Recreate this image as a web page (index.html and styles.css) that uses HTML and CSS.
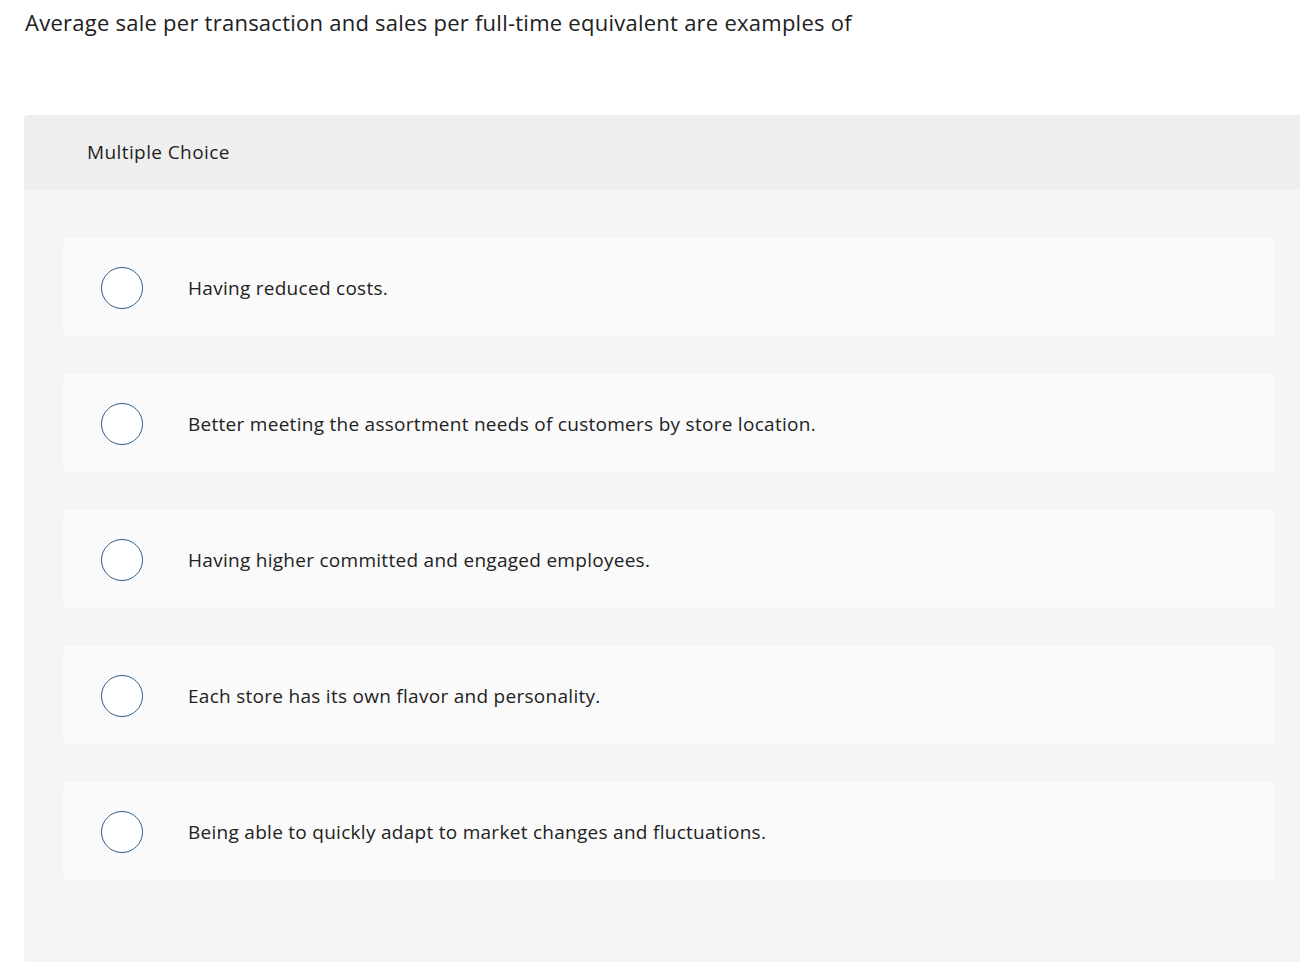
FILE: index.html
```html
<!DOCTYPE html>
<html lang="en">
<head>
<meta charset="utf-8">
<title>Multiple Choice</title>
<link rel="stylesheet" href="styles.css">
</head>
<body>
<div class="page">
  <p class="question">Average sale per transaction and sales per full-time equivalent are examples of</p>
  <section class="panel">
    <header class="panel-head">Multiple Choice</header>
    <div class="panel-body">
      <label class="option"><span class="radio"></span><span class="opt-text">Having reduced costs.</span></label>
      <label class="option"><span class="radio"></span><span class="opt-text">Better meeting the assortment needs of customers by store location.</span></label>
      <label class="option"><span class="radio"></span><span class="opt-text">Having higher committed and engaged employees.</span></label>
      <label class="option"><span class="radio"></span><span class="opt-text">Each store has its own flavor and personality.</span></label>
      <label class="option"><span class="radio"></span><span class="opt-text">Being able to quickly adapt to market changes and fluctuations.</span></label>
    </div>
  </section>
</div>
</body>
</html>
```
FILE: styles.css
```css
html, body {
  margin: 0;
  padding: 0;
  background: #ffffff;
  overflow: hidden;
}
body {
  font-family: "Open Sans", "Lato", Arial, sans-serif;
  color: #212121;
}
.page {
  padding: 0 0 0 24px;
}
.question {
  margin: 0;
  padding: 7px 0 0 1px;
  height: 115px;
  box-sizing: border-box;
  font-size: 22px;
  letter-spacing: 0.25px;
  line-height: 30px;
  color: #212121;
}
.panel {
  border-radius: 4px 0 0 4px;
  overflow: hidden;
  height: 847px;
  display: flex;
  flex-direction: column;
}
.panel-head {
  background: #efefef;
  height: 75px;
  padding-left: 63px;
  padding-bottom: 1px;
  box-sizing: border-box;
  display: flex;
  align-items: center;
  font-size: 19px;
  letter-spacing: 0.4px;
  color: #1f1f1f;
}
.panel-body {
  flex: 1;
  background: #f5f5f5;
  padding: 48px 26px 0 39px;
  display: flex;
  flex-direction: column;
  gap: 37px;
}
.option {
  height: 99px;
  background: #fafafa;
  border-radius: 5px;
  display: flex;
  align-items: center;
  padding-left: 38px;
}
.radio {
  width: 42px;
  height: 42px;
  box-sizing: border-box;
  border: 1.5px solid #2b5c8f;
  border-radius: 50%;
  background: #ffffff;
  flex: none;
}
.opt-text {
  margin-left: 45px;
  font-size: 19px;
  letter-spacing: 0.28px;
  color: #222222;
}
```
